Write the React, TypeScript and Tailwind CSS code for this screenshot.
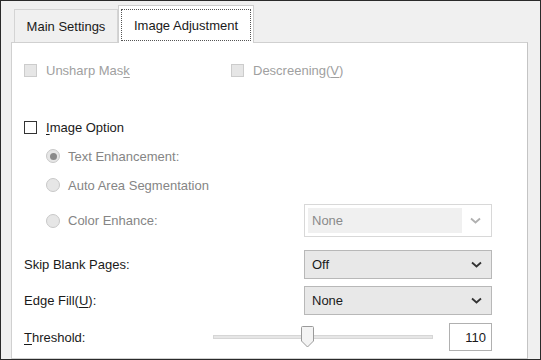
import React from "react";

const font = { fontFamily: '"Liberation Sans", Arial, sans-serif' };

// label with one underlined mnemonic letter
function Mn({ a, u, b }: { a: string; u: string; b?: string }) {
  return (
    <span>
      {a}
      <span className="underline underline-offset-2">{u}</span>
      {b}
    </span>
  );
}

function Check({ disabled, children }: { disabled?: boolean; children: React.ReactNode }) {
  return (
    <div className="flex items-center gap-[9px]">
      <div
        className={
          disabled
            ? "w-[13px] h-[13px] border border-[#cccccc] bg-[#e6e6e6]"
            : "w-[13px] h-[13px] border border-[#333333] bg-white"
        }
      />
      <span className={disabled ? "text-[#a0a0a0]" : "text-[#1a1a1a]"}>{children}</span>
    </div>
  );
}

function Radio({ checked, label }: { checked?: boolean; label: string }) {
  return (
    <div className="flex items-center gap-[8px] text-[#858585]">
      <div className="w-[14px] h-[14px] rounded-full border border-[#c8c8c8] bg-[#e6e6e6] flex items-center justify-center">
        {checked && <div className="w-[7px] h-[7px] rounded-full bg-[#8a8a8a]" />}
      </div>
      <span>{label}</span>
    </div>
  );
}

function Chevron({ color }: { color: string }) {
  return (
    <svg width="11" height="7" viewBox="0 0 11 7">
      <path d="M1 1.5 L5.5 5.5 L10 1.5" fill="none" stroke={color} strokeWidth="1.8" />
    </svg>
  );
}

export default function App() {
  return (
    <div
      className="w-[541px] h-[360px] overflow-hidden bg-[#f0f0f0] border border-[#2a2a2a] text-[13px] leading-none flex flex-col pl-[10px] pr-[12px]"
      style={font}
    >
      {/* tabs */}
      <div className="flex items-end h-[41px] pl-[3px] shrink-0">
        <div className="h-[33px] w-[104px] border border-b-0 border-[#d4d4d4] bg-[#f0f0f0] flex items-center justify-center text-[#1a1a1a]">
          Main Settings
        </div>
        <div className="h-[38px] w-[136px] border border-b-0 border-[#cfcfcf] bg-white flex items-center justify-center -mb-px relative z-10 px-[2px] pt-[3px] pb-[2px]">
          <span className="w-full h-full border border-dotted border-[#555] flex items-center justify-center text-[#1a1a1a]">
            Image Adjustment
          </span>
        </div>
      </div>

      {/* panel */}
      <div className="flex-1 bg-white border border-[#d0d0d0] border-r-[#c4c4c4] pl-[12px] pr-[35px] flex flex-col">
        <div className="flex items-center h-[30px] mt-[12px]">
          <div className="w-[207px]">
            <Check disabled>
              <Mn a="Unsharp Mas" u="k" />
            </Check>
          </div>
          <Check disabled>
            <Mn a="Descreening(" u="V" b=")" />
          </Check>
        </div>

        <div className="flex items-center h-[20px] mt-[32px]">
          <Check>
            <Mn a="" u="I" b="mage Option" />
          </Check>
        </div>

        <div className="pl-[22px] flex flex-col">
          <div className="h-[20px] mt-[9px] flex items-center">
            <Radio checked label="Text Enhancement:" />
          </div>
          <div className="h-[20px] mt-[9px] flex items-center">
            <Radio label="Auto Area Segmentation" />
          </div>
          <div className="flex items-center justify-between mt-[9px]">
            <Radio label="Color Enhance:" />
            <div className="w-[188px] h-[33px] border border-[#d8d8d8] bg-white flex items-center px-[3px]">
              <div className="flex-1 h-[25px] bg-[#f0f0f0] text-[#8a8a8a] flex items-center pl-[4px]">None</div>
              <div className="w-[26px] flex items-center justify-center">
                <Chevron color="#b0b0b0" />
              </div>
            </div>
          </div>
        </div>

        <div className="flex items-center justify-between mt-[13px] text-[#1a1a1a]">
          <span>Skip Blank Pages:</span>
          <div className="w-[188px] h-[29px] border border-[#b8b8b8] bg-[#e8e8e8] flex items-center pl-[7px] pr-[9px] justify-between">
            <span>Off</span>
            <Chevron color="#333" />
          </div>
        </div>

        <div className="flex items-center justify-between mt-[7px] text-[#1a1a1a]">
          <Mn a="Edge Fill(" u="U" b="):" />
          <div className="w-[188px] h-[29px] border border-[#b8b8b8] bg-[#e8e8e8] flex items-center pl-[7px] pr-[9px] justify-between">
            <span>None</span>
            <Chevron color="#333" />
          </div>
        </div>

        <div className="flex items-center mt-[8px] text-[#1a1a1a] h-[28px]">
          <span className="w-[189px]">
            <Mn a="" u="T" b="hreshold:" />
          </span>
          <div className="relative w-[220px] h-[28px] flex items-center">
            <div className="w-full h-[4px] bg-[#e6e6e6] border border-[#d6d6d6]" />
            <svg className="absolute left-[88px] top-[3px]" width="13" height="22" viewBox="0 0 13 22">
              <path d="M0.5 1.5 Q0.5 0.5 1.5 0.5 L11.5 0.5 Q12.5 0.5 12.5 1.5 L12.5 15 L6.5 21 L0.5 15 Z" fill="#f3f3f3" stroke="#9a9a9a" />
            </svg>
          </div>
          <div className="ml-auto w-[43px] h-[28px] border border-[#b0b0b0] bg-white flex items-center justify-end pr-[5px]">
            110
          </div>
        </div>
      </div>
    </div>
  );
}
